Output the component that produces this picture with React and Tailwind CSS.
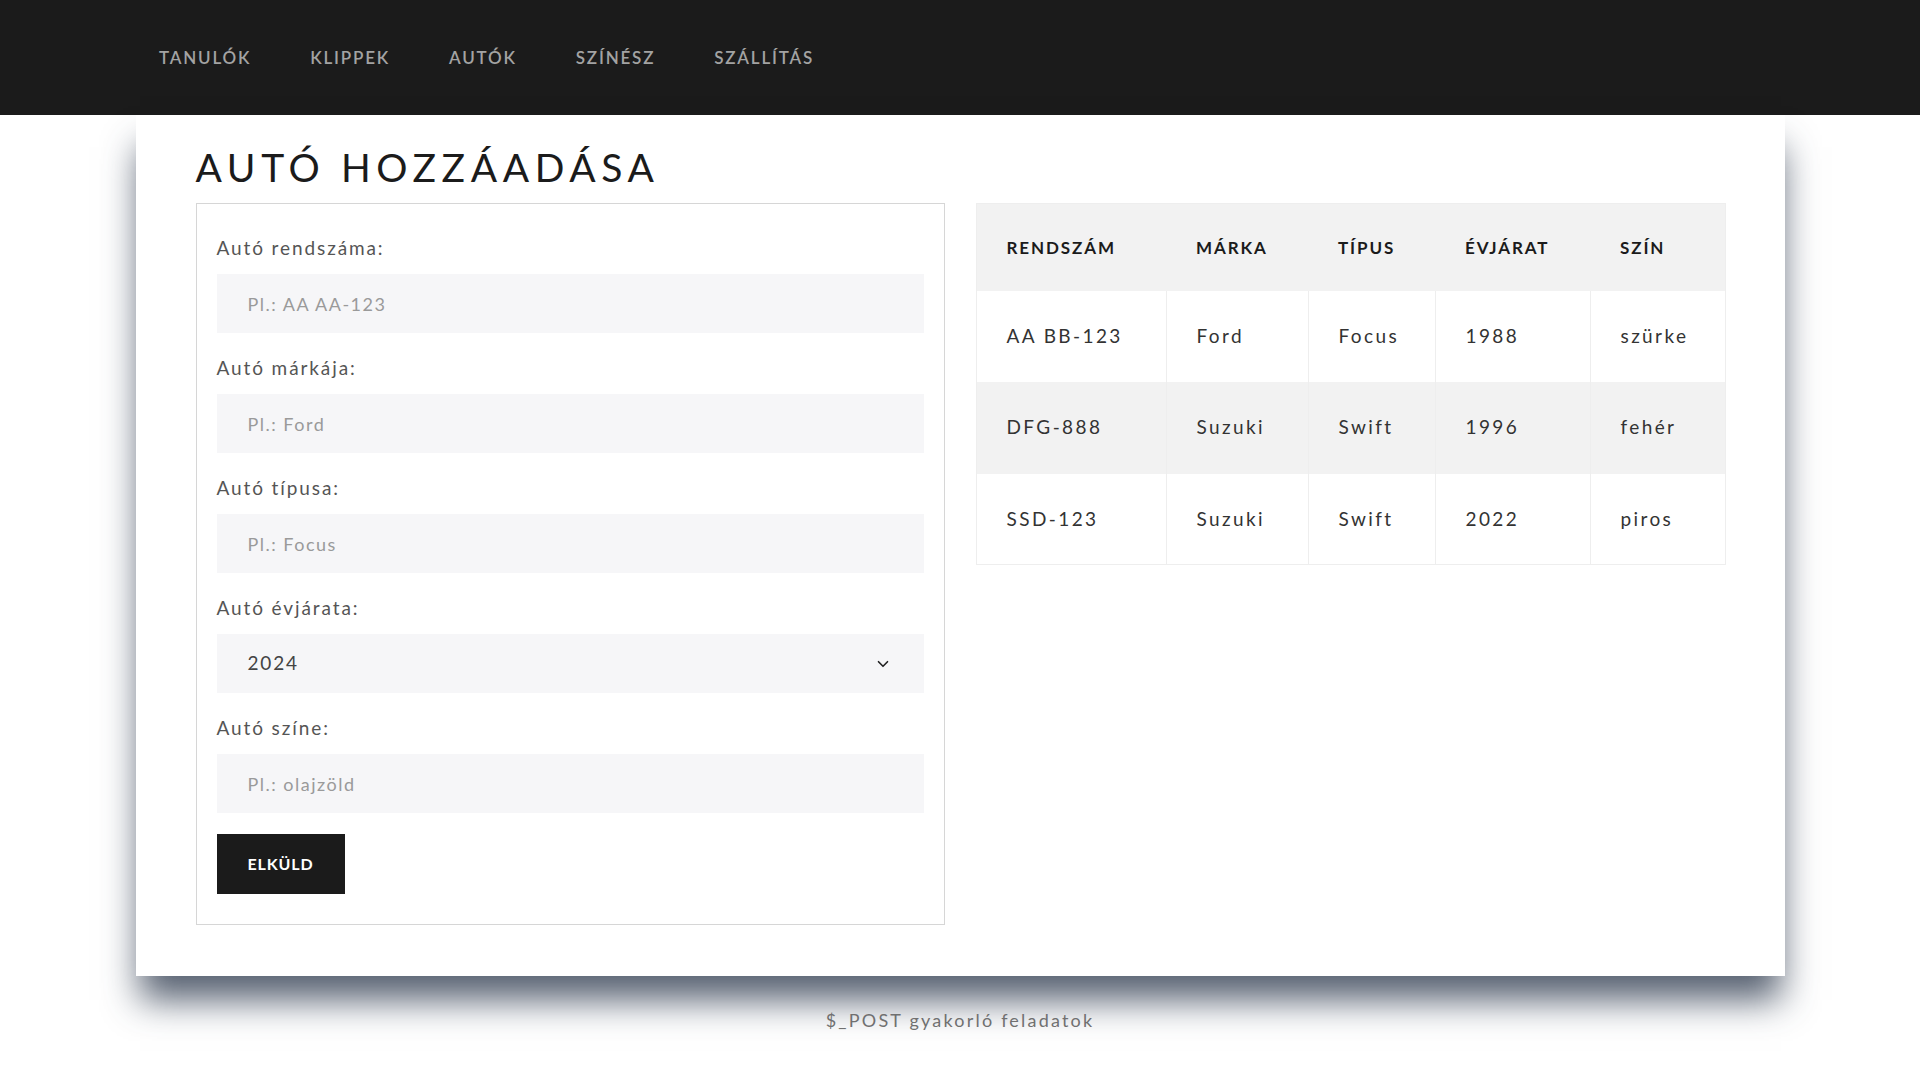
import { ChevronDown } from 'lucide-react'

const NAV = ['TANULÓK', 'KLIPPEK', 'AUTÓK', 'SZÍNÉSZ', 'SZÁLLÍTÁS']

const FIELDS = [
  { label: 'Autó rendszáma:', placeholder: 'Pl.: AA AA-123' },
  { label: 'Autó márkája:', placeholder: 'Pl.: Ford' },
  { label: 'Autó típusa:', placeholder: 'Pl.: Focus' },
  { label: 'Autó évjárata:', select: '2024' },
  { label: 'Autó színe:', placeholder: 'Pl.: olajzöld' },
]

const COLS = [
  { label: 'RENDSZÁM', w: 'w-[190px]' },
  { label: 'MÁRKA', w: 'w-[142px]' },
  { label: 'TÍPUS', w: 'w-[127px]' },
  { label: 'ÉVJÁRAT', w: 'w-[155px]' },
  { label: 'SZÍN', w: 'w-[135px]' },
]

const ROWS = [
  ['AA BB-123', 'Ford', 'Focus', '1988', 'szürke'],
  ['DFG-888', 'Suzuki', 'Swift', '1996', 'fehér'],
  ['SSD-123', 'Suzuki', 'Swift', '2022', 'piros'],
]

export default function App() {
  return (
    <div className="min-h-[1065px] bg-white font-['Lato','Noto_Sans',sans-serif]">
      {/* navbar */}
      <nav className="h-[115px] bg-[#1b1b1b] flex items-center pl-[159px] gap-[59px]">
        {NAV.map(n => (
          <a key={n} className="text-[17px] font-semibold tracking-[1.8px] text-[#a3a3a3]">{n}</a>
        ))}
      </nav>

      {/* card */}
      <div className="mx-auto w-[1649px] bg-white px-[60px] pb-[51px] shadow-[0_28px_34px_-4px_rgba(45,58,78,0.8)]">
        <h1 className="h-[88px] pt-[30px] text-[39px] leading-[44px] tracking-[5.6px] text-[#1b1b1b] font-normal">
          AUTÓ HOZZÁADÁSA
        </h1>

        <div className="grid grid-cols-[749px_749px] gap-[31px] items-start">
          {/* form */}
          <form className="border border-[#d6d6d6] px-[20px] pt-[30px] pb-[30px]">
            {FIELDS.map(f => (
              <div key={f.label}>
                <label className="block h-[27px] leading-[27px] mb-[13px] text-[19px] tracking-[1.9px] text-[#555]">
                  {f.label}
                </label>
                {f.select ? (
                  <div className="h-[59px] mb-[21px] bg-[#f6f6f8] flex items-center justify-between pl-[31px] pr-[32px] text-[19px] tracking-[1.8px] text-[#444]">
                    <span>{f.select}</span>
                    <ChevronDown size={18} strokeWidth={2.2} className="text-[#222]" />
                  </div>
                ) : (
                  <input
                    placeholder={f.placeholder}
                    className="block w-full h-[59px] mb-[21px] bg-[#f6f6f8] pl-[31px] text-[18px] tracking-[1.5px] outline-none placeholder:text-[#9a9a9a]"
                  />
                )}
              </div>
            ))}
            <button
              type="button"
              className="h-[60px] w-[128px] bg-[#1b1b1b] text-white text-[16px] font-bold tracking-[0.9px]"
            >
              ELKÜLD
            </button>
          </form>

          {/* table */}
          <table className="border-collapse border border-[#eeeeee] w-[749px] table-fixed">
            <thead>
              <tr className="bg-[#f2f2f2] h-[87px]">
                {COLS.map(c => (
                  <th key={c.label} className={`${c.w} text-left pl-[30px] text-[17px] font-bold tracking-[1.9px] text-[#1b1b1b]`}>
                    {c.label}
                  </th>
                ))}
              </tr>
            </thead>
            <tbody>
              {ROWS.map((r, i) => (
                <tr key={i} className={i === 1 ? 'bg-[#f2f2f2] h-[92px]' : 'bg-white h-[91px]'}>
                  {r.map((v, j) => (
                    <td key={j} className="border-l border-[#eeeeee] first:border-l-0 pl-[30px] text-[19px] tracking-[2.4px] text-[#333]">
                      {v}
                    </td>
                  ))}
                </tr>
              ))}
            </tbody>
          </table>
        </div>
      </div>

      <footer className="pt-[31px] text-center text-[18px] tracking-[2.2px] text-[#707070]">
        $_POST gyakorló feladatok
      </footer>
    </div>
  )
}
